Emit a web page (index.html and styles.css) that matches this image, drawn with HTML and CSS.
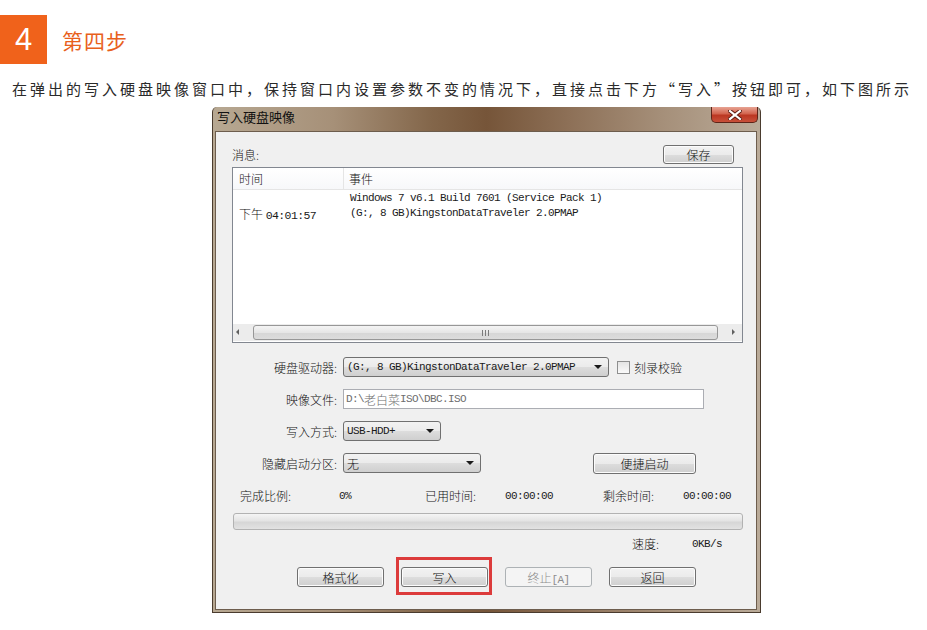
FILE: index.html
```html
<!DOCTYPE html>
<html lang="zh-CN">
<head>
    <meta charset="UTF-8">
    <title>第四步</title>
    <link rel="stylesheet" href="styles.css">
</head>
<body>
    <!-- Step heading -->
    <div class="step">
        <div class="step-num">4</div>
        <div class="step-title">第四步</div>
    </div>
    <p class="intro">在弹出的写入硬盘映像窗口中，保持窗口内设置参数不变的情况下，直接点击下方“写入”按钮即可，如下图所示</p>

    <!-- Dialog screenshot -->
    <div class="window">
        <div class="titlebar">
            <span class="title">写入硬盘映像</span>
            <span class="close">
                <svg width="14" height="10" viewBox="0 0 14 10">
                    <path d="M2 1 L12 9 M12 1 L2 9" stroke="#5a1a10" stroke-width="4" stroke-linecap="square"/>
                    <path d="M2 1 L12 9 M12 1 L2 9" stroke="#ffffff" stroke-width="2.2" stroke-linecap="square"/>
                </svg>
            </span>
        </div>
        <div class="client">
            <div class="msg-row">
                <span>消息:</span>
                <button class="btn btn-save">保存</button>
            </div>

            <div class="listbox">
                <div class="list-head">
                    <div class="col-time">时间</div>
                    <div class="col-event">事件</div>
                </div>
                <div class="list-body">
                    <div class="col-time cell-time"><span class="cjk">下午</span> <span class="mono">04:01:57</span></div>
                    <div class="col-event mono">Windows 7 v6.1 Build 7601 (Service Pack 1)<br>(G:, 8 GB)KingstonDataTraveler 2.0PMAP</div>
                </div>
                <div class="hscroll">
                    <span class="arrow arrow-left"></span>
                    <span class="thumb"><span class="grip"></span></span>
                    <span class="arrow arrow-right"></span>
                </div>
            </div>

            <div class="form">
                <label class="label">硬盘驱动器:</label>
                <div class="field">
                    <div class="combo combo-drive"><span class="mono">(G:, 8 GB)KingstonDataTraveler 2.0PMAP</span><i class="caret"></i></div>
                    <span class="check"></span>
                    <span class="check-text">刻录校验</span>
                </div>

                <label class="label">映像文件:</label>
                <div class="field">
                    <div class="textbox"><span class="mono">D:\</span>老白菜<span class="mono">ISO\DBC.ISO</span></div>
                </div>

                <label class="label">写入方式:</label>
                <div class="field">
                    <div class="combo combo-mode"><span class="mono">USB-HDD+</span><i class="caret"></i></div>
                </div>

                <label class="label">隐藏启动分区:</label>
                <div class="field">
                    <div class="combo combo-hide"><span>无</span><i class="caret"></i></div>
                    <button class="btn btn-quick">便捷启动</button>
                </div>
            </div>

            <div class="status">
                <span class="s-label">完成比例:</span>
                <span class="s-value s-pct mono">0%</span>
                <span class="s-label s-used">已用时间:</span>
                <span class="s-value s-time mono">00:00:00</span>
                <span class="s-label s-left">剩余时间:</span>
                <span class="s-value mono">00:00:00</span>
            </div>

            <div class="progress"></div>

            <div class="speed">
                <span class="speed-label">速度:</span>
                <span class="mono">0KB/s</span>
            </div>

            <div class="actions">
                <button class="btn btn-action">格式化</button>
                <span class="highlight-wrap">
                    <button class="btn btn-action">写入</button>
                    <span class="highlight"></span>
                </span>
                <button class="btn btn-action" disabled>终止<span class="mono">[A]</span></button>
                <button class="btn btn-action">返回</button>
            </div>
        </div>
    </div>
</body>
</html>
```

FILE: styles.css
```css
body {
    margin: 0;
    background: #ffffff;
    font-family: "Noto Sans CJK SC", "Liberation Sans", sans-serif;
    color: #333333;
}
.mono {
    font-family: "Liberation Mono", "Noto Sans CJK SC", monospace;
    font-size: 11px;
    letter-spacing: -0.6px;
    color: #1a1a1a;
}
.cjk { font-family: "Noto Sans CJK SC", sans-serif; }

/* heading */
.step {
    display: flex;
    align-items: center;
    gap: 15px;
    padding-top: 15px;
}
.step-num {
    width: 47px;
    height: 49px;
    background: #f0621b;
    color: #ffffff;
    font-family: "Liberation Sans", Arial, sans-serif;
    font-size: 31px;
    line-height: 49px;
    text-align: center;
}
.step-title {
    color: #e8601c;
    font-size: 21px;
    letter-spacing: 1px;
}
.intro {
    margin: 15px 0 8px 12px;
    font-size: 15px;
    line-height: 20px;
    letter-spacing: 3px;
    color: #2a2a2a;
    white-space: nowrap;
}

/* dialog */
.window {
    margin-left: 212px;
    width: 549px;
    box-sizing: border-box;
    padding: 0 3px 2px 2px;
    border: 1px solid #4a3b2e;
    border-top: none;
    border-radius: 5px 5px 0 0;
    background: linear-gradient(to right, #b7a892 0%, #a69078 22%, #83664a 40%, #765539 50%, #8d7057 65%, #a58f79 82%, #baab99 100%);
}
.titlebar {
    height: 24px;
    display: flex;
    justify-content: space-between;
    align-items: flex-start;
}
.title {
    padding-left: 2px;
    line-height: 20px;
    font-size: 13px;
    color: #111111;
}
.close {
    width: 45px;
    height: 15px;
    margin-right: -1px;
    display: flex;
    align-items: center;
    justify-content: center;
    border: 1px solid #5e2418;
    border-top: none;
    border-radius: 0 0 5px 5px;
    background: linear-gradient(#e7a393 0%, #d2644e 45%, #bb3722 55%, #c8503a 100%);
}
.client {
    background: #f0f0f0;
    border: 1px solid #6d5d4d;
    padding: 12px 13px 22px 16px;
    font-size: 12px;
    font-weight: 300;
    color: #111111;
}
.msg-row {
    height: 20px;
    display: flex;
    justify-content: space-between;
    align-items: center;
}

/* buttons */
.btn {
    font-family: "Noto Sans CJK SC", sans-serif;
    font-size: 12px;
    font-weight: 300;
    color: #111111;
    height: 20px;
    padding: 0;
    border: 1px solid #707070;
    border-radius: 3px;
    background: linear-gradient(#f2f2f2 0%, #ebebeb 50%, #dddddd 51%, #cfcfcf 100%);
    box-shadow: inset 0 0 0 1px #fcfcfc;
}
.btn:disabled {
    color: #8d8d8d;
    border-color: #adb2b5;
    background: #f4f4f4;
    box-shadow: none;
}
.btn:disabled .mono { color: #8d8d8d; }
.btn-save {
    width: 71px;
    height: 19px;
    margin-right: 9px;
}

/* list view */
.listbox {
    margin-top: 3px;
    height: 176px;
    box-sizing: border-box;
    border: 1px solid #828790;
    background: #ffffff;
    display: flex;
    flex-direction: column;
}
.list-head {
    height: 21px;
    display: flex;
    align-items: center;
    border-bottom: 1px solid #e5e5e5;
    background: linear-gradient(#ffffff, #f7f8fa);
}
.list-head .col-time { border-right: 1px solid #e5e5e5; line-height: 21px; }
.col-time {
    width: 111px;
    box-sizing: border-box;
    padding-left: 6px;
    flex-shrink: 0;
}
.col-event { padding-left: 5px; }
.list-body {
    flex: 1;
    display: flex;
    padding-top: 1px;
    line-height: 15px;
}
.cell-time { padding-top: 15px; font-size: 12px; }
.cell-time .mono { font-size: 11.5px; }
.list-body .col-event { padding-left: 6px; }
.hscroll {
    height: 17px;
    margin-bottom: 1px;
    display: flex;
    align-items: center;
    background: #ececec;
}
.arrow {
    width: 17px;
    height: 17px;
    position: relative;
    flex-shrink: 0;
}
.arrow::after {
    content: "";
    position: absolute;
    top: 5px;
    left: 7px;
    border: 3.5px solid transparent;
}
.arrow-left::after { border-right: 3.5px solid #606060; left: 3px; border-left-width: 0; }
.arrow-right::after { border-left: 3.5px solid #606060; border-right-width: 0; }
.thumb {
    flex: 1;
    height: 15px;
    margin: 0 7px 0 3px;
    box-sizing: border-box;
    border: 1px solid #979797;
    border-radius: 3px;
    background: linear-gradient(#f4f4f4 0%, #e6e6e6 50%, #d6d6d6 51%, #dcdcdc 100%);
    display: flex;
    align-items: center;
    justify-content: center;
}
.grip {
    width: 7px;
    height: 6px;
    background: repeating-linear-gradient(to right, #7c7c7c 0, #7c7c7c 1px, transparent 1px, transparent 3px);
}

/* form */
.form {
    margin-top: 14px;
    display: grid;
    grid-template-columns: 105px 1fr;
    grid-auto-rows: 20px;
    column-gap: 6px;
    row-gap: 12px;
    align-items: center;
}
.label { text-align: right; }
.field {
    display: flex;
    align-items: center;
    height: 20px;
}
.combo {
    height: 20px;
    box-sizing: border-box;
    border: 1px solid #707070;
    border-radius: 3px;
    background: linear-gradient(#f2f2f2 0%, #ebebeb 50%, #dddddd 51%, #cfcfcf 100%);
    display: flex;
    align-items: center;
    justify-content: space-between;
    padding: 0 6px 0 3px;
}
.caret {
    width: 0;
    height: 0;
    border-left: 4px solid transparent;
    border-right: 4px solid transparent;
    border-top: 4px solid #1a1a1a;
}
.combo-drive { width: 266px; }
.combo-mode { width: 98px; }
.combo-hide { width: 138px; }
.check {
    width: 11px;
    height: 11px;
    margin-left: 8px;
    border: 1px solid #8e8f8f;
    background: linear-gradient(#e4e4e4, #fafafa);
}
.check-text { margin-left: 4px; }
.textbox {
    width: 361px;
    height: 20px;
    box-sizing: border-box;
    border: 1px solid #abadb3;
    background: #ffffff;
    color: #6d6d6d;
    padding-left: 2px;
    display: flex;
    align-items: center;
}
.textbox .mono { color: #6d6d6d; }
.btn-quick {
    width: 103px;
    height: 21px;
    margin-left: 112px;
}

/* status */
.status {
    margin-top: 16px;
    display: flex;
    align-items: center;
    padding-left: 8px;
    line-height: 14px;
}
.s-label { width: 99px; }
.s-pct { width: 86px; }
.s-used { width: 80px; }
.s-time { width: 98px; }
.s-left { width: 80px; }
.progress {
    margin: 10px 0 0 1px;
    width: 510px;
    height: 17px;
    box-sizing: border-box;
    border: 1px solid #b2b2b2;
    border-radius: 3px;
    background: linear-gradient(#f5f5f5 0%, #e4e4e4 45%, #d6d6d6 55%, #e2e2e2 100%);
}
.speed {
    margin-top: 7px;
    padding-left: 400px;
    display: flex;
    line-height: 14px;
}
.speed-label { width: 60px; }
.actions {
    margin-top: 16px;
    padding-left: 65px;
    display: flex;
    gap: 17px;
}
.btn-action { width: 87px; }
.highlight-wrap {
    position: relative;
    display: flex;
}
.highlight {
    position: absolute;
    top: -10px;
    left: -5px;
    right: -4px;
    bottom: -8px;
    border: 3px solid #dc3b3b;
}
```
